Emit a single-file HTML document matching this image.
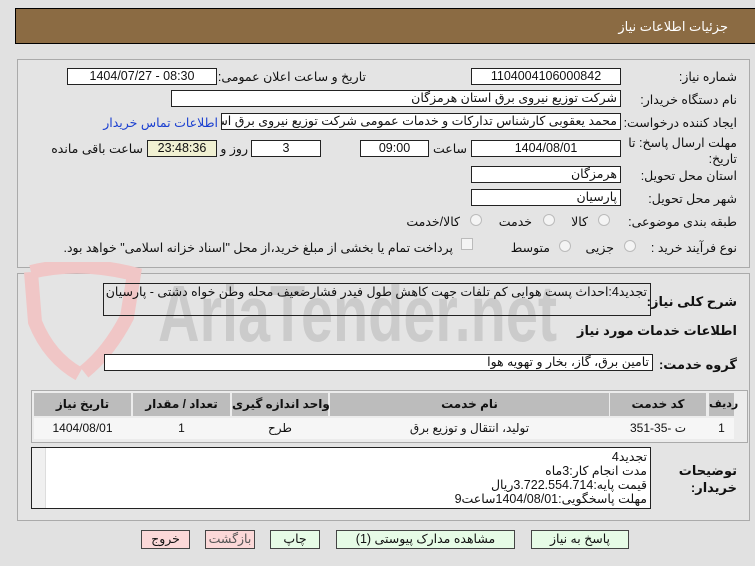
<!DOCTYPE html>
<html><head><meta charset="utf-8"><style>
*{margin:0;padding:0;box-sizing:border-box}
body{width:755px;height:566px;background:#e1e1e1;font-family:"Liberation Sans","DejaVu Sans",sans-serif;font-size:12px;color:#111;position:relative;overflow:hidden}
.a{position:absolute;white-space:nowrap}
.box{position:absolute;background:#fff;border:1px solid #222;height:17px;line-height:15px;text-align:center;font-size:12.5px;white-space:nowrap;overflow:hidden}
.r{text-align:right;padding-right:3px;direction:rtl}
.lbl{position:absolute;direction:rtl;text-align:right;font-size:12.5px;white-space:nowrap}
.b{font-weight:bold}
.rad{position:absolute;width:12px;height:12px;border-radius:50%;border:1px solid #bbb;background:#f4f4f4}
.btn{position:absolute;height:19px;border:1px solid #444;text-align:center;line-height:17px;font-size:12.5px;white-space:nowrap}
.c{position:absolute;text-align:center;font-size:12px;white-space:nowrap}
</style></head><body>
<div class="a" style="left:15px;top:8px;width:745px;height:36px;background:#8b6b43;border:1px solid #000"></div>
<div class="lbl" style="right:27px;top:19px;color:#fff;font-size:13px">جزئیات اطلاعات نیاز</div>

<div class="a" style="left:17px;top:59px;width:733px;height:209px;border:1px solid #aaa;background:#e4e4e4"></div>
<div class="a" style="left:17px;top:273px;width:733px;height:248px;border:1px solid #aaa;background:#e4e4e4"></div>

<svg class="a" style="left:19px;top:262px" width="130" height="125"><path d="M12 10 Q60 -2 115 12 L108 55 Q90 90 65 110 M12 10 L16 60 Q30 95 60 112" fill="none" stroke="#f0c6c6" stroke-width="14"/></svg>
<div class="a" style="left:158px;top:268px;font-size:80px;font-weight:bold;color:#cbcbcb;transform:scaleX(0.72);transform-origin:left">AriaTender.net</div>

<div class="lbl" style="right:18px;top:69px">شماره نیاز:</div>
<div class="box" style="left:471px;top:68px;width:150px">1104004106000842</div>
<div class="lbl" style="right:389px;top:69px">تاریخ و ساعت اعلان عمومی:</div>
<div class="box" style="left:67px;top:68px;width:150px">1404/07/27 - 08:30</div>

<div class="lbl" style="right:18px;top:92px">نام دستگاه خریدار:</div>
<div class="box r" style="left:171px;top:90px;width:450px">شرکت توزیع نیروی برق استان هرمزگان</div>

<div class="lbl" style="right:18px;top:115px">ایجاد کننده درخواست:</div>
<div class="box r" style="left:221px;top:113px;width:400px">محمد یعقوبی کارشناس تدارکات و خدمات عمومی شرکت توزیع نیروی برق استان</div>
<div class="lbl" style="right:537px;top:115px;color:#1a3fd0">اطلاعات تماس خریدار</div>

<div class="lbl" style="right:18px;top:135px;line-height:16px">مهلت ارسال پاسخ: تا<br>تاریخ:</div>
<div class="box" style="left:471px;top:140px;width:150px">1404/08/01</div>
<div class="lbl" style="right:288px;top:141px">ساعت</div>
<div class="box" style="left:360px;top:140px;width:69px">09:00</div>
<div class="box" style="left:251px;top:140px;width:70px">3</div>
<div class="lbl" style="right:507px;top:141px">روز و</div>
<div class="box" style="left:147px;top:140px;width:70px;background:#f0f0d2">23:48:36</div>
<div class="lbl" style="right:612px;top:141px">ساعت باقی مانده</div>

<div class="lbl" style="right:18px;top:168px">استان محل تحویل:</div>
<div class="box r" style="left:471px;top:166px;width:150px">هرمزگان</div>
<div class="lbl" style="right:18px;top:191px">شهر محل تحویل:</div>
<div class="box r" style="left:471px;top:189px;width:150px">پارسیان</div>

<div class="lbl" style="right:18px;top:214px">طبقه بندی موضوعی:</div>
<div class="rad" style="left:598px;top:214px"></div><div class="lbl" style="right:167px;top:214px">کالا</div>
<div class="rad" style="left:543px;top:214px"></div><div class="lbl" style="right:223px;top:214px">خدمت</div>
<div class="rad" style="left:470px;top:214px"></div><div class="lbl" style="right:295px;top:214px">کالا/خدمت</div>

<div class="lbl" style="right:18px;top:240px">نوع فرآیند خرید :</div>
<div class="rad" style="left:624px;top:240px"></div><div class="lbl" style="right:141px;top:240px">جزیی</div>
<div class="rad" style="left:559px;top:240px"></div><div class="lbl" style="right:205px;top:240px">متوسط</div>
<div class="a" style="left:461px;top:238px;width:12px;height:12px;border:1px solid #bbb;background:#f4f4f4"></div>
<div class="lbl" style="right:302px;top:240px">پرداخت تمام یا بخشی از مبلغ خرید،از محل "اسناد خزانه اسلامی" خواهد بود.</div>

<div class="lbl b" style="right:18px;top:294px;font-size:13px">شرح کلی نیاز:</div>
<div class="box r" style="left:103px;top:283px;width:548px;height:33px;background:transparent;line-height:16px">تجدید4:احداث پست هوایی کم تلفات جهت کاهش طول فیدر فشارضعیف محله وطن خواه دشتی - پارسیان</div>

<div class="lbl b" style="right:18px;top:323px;font-size:13px">اطلاعات خدمات مورد نیاز</div>
<div class="lbl b" style="right:18px;top:357px;font-size:13px">گروه خدمت:</div>
<div class="box r" style="left:104px;top:354px;width:549px">تامین برق، گاز، بخار و تهویه هوا</div>

<div class="a" style="left:31px;top:390px;width:717px;height:53px;border:1px solid #aaa;background:#ececec"></div>
<div class="a" style="left:709px;top:393px;width:25px;height:23px;background:#bcbcbc"></div>
<div class="a" style="left:610px;top:393px;width:96px;height:23px;background:#bcbcbc"></div>
<div class="a" style="left:330px;top:393px;width:279px;height:23px;background:#bcbcbc"></div>
<div class="a" style="left:232px;top:393px;width:96px;height:23px;background:#bcbcbc"></div>
<div class="a" style="left:133px;top:393px;width:97px;height:23px;background:#bcbcbc"></div>
<div class="a" style="left:34px;top:393px;width:97px;height:23px;background:#bcbcbc"></div>
<div class="a" style="left:34px;top:418px;width:700px;height:21px;background:#f6f6f6"></div>
<div class="c b" style="left:709px;width:25px;top:397px;font-size:11px">ردیف</div>
<div class="c b" style="left:610px;width:96px;top:397px">کد خدمت</div>
<div class="c b" style="left:330px;width:279px;top:397px">نام خدمت</div>
<div class="c b" style="left:232px;width:96px;top:397px">واحد اندازه گیری</div>
<div class="c b" style="left:133px;width:97px;top:397px">تعداد / مقدار</div>
<div class="c b" style="left:34px;width:97px;top:397px">تاریخ نیاز</div>
<div class="c" style="left:709px;width:25px;top:421px">1</div>
<div class="c" style="left:610px;width:96px;top:421px;direction:rtl">ت -35-351</div>
<div class="c" style="left:330px;width:279px;top:421px">تولید، انتقال و توزیع برق</div>
<div class="c" style="left:232px;width:96px;top:421px">طرح</div>
<div class="c" style="left:133px;width:97px;top:421px">1</div>
<div class="c" style="left:34px;width:97px;top:421px">1404/08/01</div>

<div class="lbl b" style="right:18px;top:462px;font-size:13px;line-height:17px">توضیحات<br>خریدار:</div>
<div class="box r" style="left:31px;top:447px;width:620px;height:62px;line-height:14px;padding-top:2px;white-space:normal">تجدید4<br>مدت انجام کار:3ماه<br>قیمت پایه:3.722.554.714ریال<br>مهلت پاسخگویی:1404/08/01ساعت9</div>
<div class="a" style="left:32px;top:448px;width:14px;height:60px;background:#f0f0f0;border-right:1px solid #ddd"></div>

<div class="btn" style="left:531px;top:530px;width:98px;background:#e6fbe6">پاسخ به نیاز</div>
<div class="btn" style="left:336px;top:530px;width:179px;background:#e6fbe6">مشاهده مدارک پیوستی (1)</div>
<div class="btn" style="left:270px;top:530px;width:50px;background:#e6fbe6">چاپ</div>
<div class="btn" style="left:205px;top:530px;width:50px;background:#fbd8d8;color:#555">بازگشت</div>
<div class="btn" style="left:141px;top:530px;width:49px;background:#fbd8d8">خروج</div>
</body></html>
